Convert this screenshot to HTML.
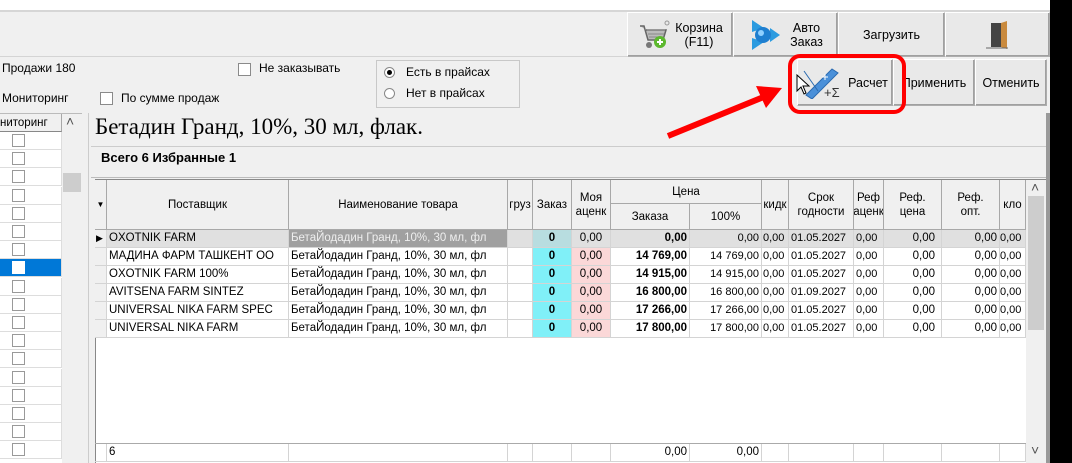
<!DOCTYPE html>
<html><head><meta charset="utf-8"><style>
*{box-sizing:border-box;margin:0;padding:0}
body{width:1072px;height:463px;overflow:hidden;background:#f0f0f0;position:relative;font-family:"Liberation Sans","DejaVu Sans",sans-serif;font-size:12px;color:#000}
.a{position:absolute}
.btn{position:absolute;background:#e9e9e9;border:1px solid #adadad;border-top-color:#fff;border-left-color:#fff;box-shadow:inset -1px -1px 0 #a0a0a0;display:flex;align-items:center;justify-content:center;font-size:12.5px;text-align:center;line-height:14px}
.cb{position:absolute;width:13px;height:13px;background:#fff;border:1px solid #8a8a8a}
.g{position:absolute;border-right:1px solid #d4d4d4;border-bottom:1px solid #d4d4d4;font-size:11.5px;white-space:nowrap;overflow:hidden;line-height:17px;padding:0 2px}
.h{position:absolute;border-right:1px solid #a8a8a8;border-bottom:1px solid #a8a8a8;background:#f0f0f0;display:flex;align-items:center;justify-content:center;text-align:center;font-size:11.5px;line-height:14px;overflow:hidden;white-space:nowrap}
</style></head><body>
<div class="a" style="left:0;top:0;width:1072px;height:10px;background:#fff"></div>
<div class="a" style="left:0;top:10px;width:1050px;height:2px;background:#d6d6d6"></div>
<div class="a" style="left:0;top:56px;width:790px;height:1px;background:#d4d4d4"></div>

<!-- top buttons -->
<div class="btn" style="left:627px;top:12px;width:106px;height:45px"><svg width="34" height="30" viewBox="0 0 34 30" style="margin-right:4px"><path d="M3 6h4l4 14h15l3-10H9" fill="#bbb" stroke="#666" stroke-width="1.5"/><path d="M10 10h18M11 14h16M12 17h14" stroke="#888"/><circle cx="12" cy="25" r="3" fill="#777"/><circle cx="23" cy="22" r="6" fill="#5cb82e"/><path d="M20 22h6M23 19v6" stroke="#fff" stroke-width="2"/><circle cx="30" cy="3" r="2" fill="none" stroke="#999"/></svg><span>Корзина<br>(F11)</span></div>
<div class="btn" style="left:733px;top:12px;width:105px;height:45px"><svg width="34" height="34" viewBox="0 0 34 34" style="margin-right:8px"><path d="M4 2l12 8-12 4z M4 32l12-8-12-4z M32 17l-10-7v14z" fill="#2b9be0"/><circle cx="15" cy="17" r="8" fill="#1e7fd0"/><circle cx="13" cy="15" r="3" fill="#8fd0ff"/></svg><span>Авто<br>Заказ</span></div>
<div class="btn" style="left:838px;top:12px;width:107px;height:45px">Загрузить</div>
<div class="btn" style="left:945px;top:12px;width:105px;height:45px"><svg width="28" height="30" viewBox="0 0 28 30"><rect x="7" y="3" width="14" height="24" fill="#444"/><path d="M17 3l6-2v28l-6-2z" fill="#c98a3e"/><path d="M2 28h22" stroke="#666"/></svg></div>

<!-- second row -->
<div class="btn" style="left:797px;top:59px;width:96px;height:47px"><svg width="40" height="32" viewBox="0 0 40 32" style="margin-right:6px"><path d="M2 4l14 20M4 28L30 2l6 4-26 26z" fill="#4a90d9" stroke="#2a6ab0"/><text x="22" y="30" font-size="13" font-family="Liberation Sans" fill="#333">+Σ</text><path d="M20 10h6M23 7v6" stroke="#fff"/></svg>Расчет</div>
<div class="btn" style="left:893px;top:59px;width:82px;height:47px">Применить</div>
<div class="btn" style="left:975px;top:59px;width:72px;height:47px">Отменить</div>

<!-- filters -->
<div class="a" style="left:2px;top:61px;font-size:12px">Продажи 180</div>
<div class="cb" style="left:238px;top:63px"></div><div class="a" style="left:259px;top:61px">Не заказывать</div>
<div class="a" style="left:2px;top:91px">Мониторинг</div>
<div class="cb" style="left:100px;top:92px"></div><div class="a" style="left:121px;top:91px">По сумме продаж</div>
<div class="a" style="left:376px;top:60px;width:144px;height:48px;border:1px solid #c8c8c8"></div>
<div class="a" style="left:384px;top:67px;width:11px;height:11px;border:1px solid #888;border-radius:50%;background:#fff"><div style="margin:2px;width:5px;height:5px;border-radius:50%;background:#000"></div></div>
<div class="a" style="left:406px;top:65px">Есть в прайсах</div>
<div class="a" style="left:384px;top:88px;width:11px;height:11px;border:1px solid #888;border-radius:50%;background:#fff"></div>
<div class="a" style="left:406px;top:86px">Нет в прайсах</div>

<!-- left list -->
<div class="a" style="left:0;top:113px;width:82px;height:350px;background:#fff;border-top:1px solid #bbb"></div>
<div class="h" style="left:0;top:114px;width:62px;height:18px;justify-content:flex-start;border-bottom:1px solid #888">ниторинг</div>
<div class="a" style="left:62px;top:114px;width:20px;height:349px;background:#f0f0f0"></div>
<div class="a" style="left:66px;top:113px;font-size:14px;color:#555">&#708;</div>
<div class="a" style="left:63px;top:173px;width:18px;height:19px;background:#cdcdcd"></div>
<div id="ll"></div>
<div class="a" style="left:82px;top:113px;width:6px;height:350px;background:#f0f0f0"></div>

<!-- main panel -->
<div class="a" style="left:88px;top:113px;width:958px;height:350px;background:#f0f0f0;border-left:1px solid #ccc"></div>
<div class="a" style="left:1046px;top:113px;width:4px;height:350px;background:#999"></div>
<div class="a" style="left:95px;top:114px;font-family:'Liberation Serif',serif;font-size:23px">Бетадин Гранд, 10%, 30 мл, флак.</div>
<div class="a" style="left:91px;top:146px;width:955px;height:1px;background:#ccc"></div>
<div class="a" style="left:101px;top:150px;font-weight:bold;font-size:13px">Всего 6 Избранные 1</div>
<div class="a" style="left:91px;top:177px;width:955px;height:1px;background:#bbb"></div>
<div class="a" style="left:95px;top:179px;width:951px;height:284px;background:#fff;border-left:1px solid #888;border-top:1px solid #888"></div>
<div id="grid"></div>
<div class="a" style="left:1026px;top:180px;width:20px;height:283px;background:#f0f0f0"></div>
<div class="a" style="left:1028px;top:196px;width:16px;height:134px;background:#cdcdcd"></div>
<div class="a" style="left:1031px;top:179px;font-size:14px;color:#555">&#708;</div>
<div class="a" style="left:1031px;top:442px;font-size:14px;color:#555">&#709;</div>

<!-- overlay -->
<svg class="a" style="left:796px;top:74px" width="16" height="22" viewBox="0 0 16 22"><path d="M1 1v16l4-4 3 7 2-1-3-7h6z" fill="#fff" stroke="#000"/></svg>
<div class="a" style="left:788px;top:54px;width:118px;height:60px;border:4px solid #f00;border-radius:12px"></div>
<svg class="a" style="left:660px;top:78px" width="130" height="65"><path d="M8 58L106 18" stroke="#f00" stroke-width="6"/><path d="M122 10L96 8l10 22z" fill="#f00"/></svg>
<div class="a" style="left:1050px;top:0;width:22px;height:463px;background:#000"></div>

<script>
var ll='';
for(var i=0;i<18;i++){var y=132+i*18.2;var sel=i==7;
ll+='<div class="a" style="left:0;top:'+y+'px;width:62px;height:18px;border-bottom:1px solid #ddd;border-right:1px solid #ddd;background:'+(sel?'#0078d7':'#fff')+'"></div><div class="cb" style="left:12px;top:'+(y+2)+'px;border-color:'+(sel?'#fff':'#999')+'"></div>';}
document.getElementById('ll').innerHTML=ll;
var H='';
function hd(x1,x2,y,h,t){H+='<div class="h" style="left:'+x1+'px;top:'+y+'px;width:'+(x2-x1)+'px;height:'+h+'px">'+t+'</div>';}
hd(95,107,180,50,'<span style="font-size:8px">&#9660;</span>');
hd(107,289,180,50,'Поставщик');hd(289,508,180,50,'Наименование товара');hd(508,533,180,50,'груз');
hd(533,572,180,50,'Заказ');hd(572,611,180,50,'Моя<br>аценк');hd(611,762,180,24,'Цена');
hd(611,690,204,26,'Заказа');hd(690,762,204,26,'100%');hd(762,789,180,50,'кидк');hd(789,854,180,50,'Срок<br>годности');
hd(854,884,180,50,'Реф<br>аценк');hd(884,942,180,50,'Реф.<br>цена');hd(942,1000,180,50,'Реф.<br>опт.');hd(1000,1026,180,50,'кло');
var rows=[['OXOTNIK FARM','0,00','0,00','01.05.2027'],['МАДИНА ФАРМ ТАШКЕНТ ОО','14 769,00','14 769,00','01.05.2027'],['OXOTNIK FARM 100%','14 915,00','14 915,00','01.05.2027'],['AVITSENA FARM SINTEZ','16 800,00','16 800,00','01.09.2027'],['UNIVERSAL NIKA FARM SPEC','17 266,00','17 266,00','01.05.2027'],['UNIVERSAL NIKA FARM','17 800,00','17 800,00','01.05.2027']];
function c(x1,x2,y,t,st){H+='<div class="g" style="left:'+x1+'px;top:'+y+'px;width:'+(x2-x1)+'px;height:18px;'+(st||'')+'">'+t+'</div>';}
rows.forEach(function(r,i){var y=230+i*18;var f=i==0;var bg=f?'background:#e0e0e0;':'';
c(95,107,y,f?'<span style="font-size:9px">&#9654;</span>':'','background:#f0f0f0;padding:0 1px');
c(107,289,y,r[0],bg);
c(289,508,y,'БетаЙодадин Гранд, 10%, 30 мл, фл',f?'background:#a0a0a0;color:#eee':'');
c(508,533,y,'',bg);c(533,572,y,'0',(f?'background:#b8dde0;':'background:#80f0f8;')+'text-align:center;font-weight:bold');
c(572,611,y,'0,00',f?bg+'text-align:center':'background:#fbd8d8;text-align:center');
c(611,690,y,r[1],bg+'text-align:right;font-weight:bold');c(690,762,y,r[2],bg+'text-align:right;font-size:11px');
c(762,789,y,'0,00',bg+'font-size:11px;padding:0 1px');c(789,854,y,r[3],bg+'font-size:11px');
c(854,884,y,'0,00',bg+'font-size:11px');c(884,942,y,'0,00',bg+'text-align:right;padding-right:6px');
c(942,1000,y,'0,00',bg+'text-align:right');c(1000,1026,y,'0,00',bg+'font-size:11px;padding:0');});
var fy=444;
H+='<div class="a" style="left:95px;top:'+(fy-1)+'px;width:931px;height:1px;background:#aaa"></div>';
c(95,107,fy,'','');c(107,289,fy,'6','');c(289,508,fy,'','');c(508,533,fy,'','');c(533,572,fy,'','');c(572,611,fy,'','');
c(611,690,fy,'0,00','text-align:right');c(690,762,fy,'0,00','text-align:right');c(762,789,fy,'','');c(789,854,fy,'','');c(854,884,fy,'','');c(884,942,fy,'','');c(942,1000,fy,'','');c(1000,1026,fy,'','');
document.getElementById('grid').innerHTML=H;
</script>
</body></html>
